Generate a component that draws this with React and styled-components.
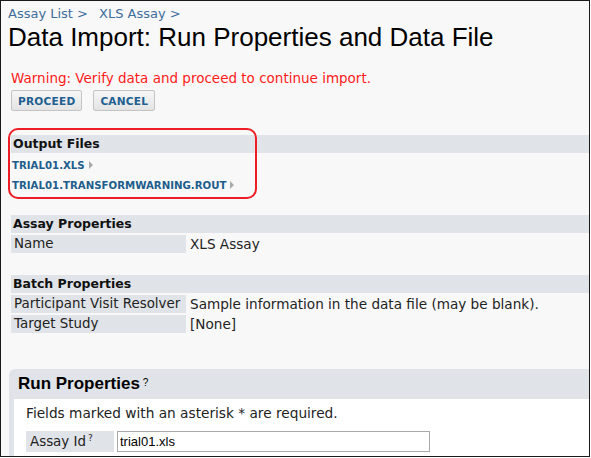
import React from "react";
import styled, { createGlobalStyle } from "styled-components";

const GlobalStyle = createGlobalStyle`
  html, body {
    margin: 0;
    padding: 0;
    background: #ffffff;
  }
`;

const Frame = styled.div`
  width: 590px;
  height: 457px;
  box-sizing: border-box;
  border: 1px solid #1a1a1a;
  background: #f8f8f8;
  overflow: hidden;
  font-family: "DejaVu Sans", Verdana, sans-serif;
  font-size: 13.4px;
  color: #222;
`;

const Page = styled.div`
  padding: 4px 0 0 7px;
  display: flex;
  flex-direction: column;
`;

const Breadcrumb = styled.div`
  font-size: 13px;
  color: #3e6e9c;
  height: 17px;
  line-height: 17px;
`;

const Crumb = styled.span`
  margin-right: 11px;
`;

const Title = styled.h1`
  margin: 0;
  font-family: "Liberation Sans", Arial, sans-serif;
  font-weight: 400;
  font-size: 26px;
  line-height: 30px;
  color: #000;
`;

const Warning = styled.div`
  margin: 18px 0 0 3px;
  color: #ff1a1a;
  font-size: 13.5px;
  line-height: 16px;
`;

const ButtonRow = styled.div`
  display: flex;
  gap: 11px;
  margin: 4px 0 0 3px;
`;

const Button = styled.button`
  height: 21px;
  padding: 0 6px;
  box-sizing: border-box;
  border: 1px solid #c4c4c4;
  border-radius: 2px;
  background: linear-gradient(#f6f6f6, #e4e4e4);
  color: #1f5f91;
  font-family: "DejaVu Sans", Verdana, sans-serif;
  font-weight: 700;
  font-size: 10.6px;
  letter-spacing: 0.2px;
`;

const Section = styled.div`
  position: relative;
  margin-top: ${(p) => p.$top}px;
  margin-left: 3px;
`;

const Highlight = styled.div`
  position: absolute;
  left: -3px;
  top: -7px;
  width: 249px;
  height: 71px;
  box-sizing: border-box;
  border: 2px solid #ee1c24;
  border-radius: 10px;
  pointer-events: none;
`;

const SectionHeader = styled.div`
  height: 18px;
  line-height: 18px;
  background: #e0e4e8;
  padding-left: 2px;
  font-weight: 700;
  font-size: 12.5px;
  color: #111;
`;

const FileList = styled.div`
  display: flex;
  flex-direction: column;
  padding: 2px 0 0 1px;
`;

const FileLink = styled.a`
  display: flex;
  align-items: center;
  gap: 4px;
  height: 20px;
  color: #215d8c;
  font-weight: 700;
  font-size: 10.2px;
  text-decoration: none;
`;

const Caret = styled.span`
  width: 0;
  height: 0;
  border-top: 4px solid transparent;
  border-bottom: 4px solid transparent;
  border-left: 4px solid #aaaaaa;
`;

const PropGrid = styled.div`
  display: grid;
  grid-template-columns: 175px 1fr;
  column-gap: 4px;
  row-gap: 2px;
  margin-top: 2px;
`;

const Label = styled.div`
  height: 18px;
  line-height: 18px;
  background: #e0e4e8;
  padding-left: 3px;
  white-space: nowrap;
`;

const Value = styled.div`
  height: 18px;
  line-height: 18px;
  white-space: nowrap;
  font-size: 13.6px;
`;

const Panel = styled.div`
  margin-top: ${(p) => p.$top}px;
  margin-left: 1px;
  width: 600px;
  background: #e0e4e8;
  border-top-left-radius: 6px;
  padding: 0 0 0 5px;
`;

const PanelHeader = styled.div`
  height: 30px;
  display: flex;
  align-items: center;
  padding-left: 4px;
  font-family: "Liberation Sans", Arial, sans-serif;
  font-weight: 700;
  font-size: 17px;
  color: #000;
`;

const Sup = styled.sup`
  font-size: 10px;
  font-weight: 400;
  margin-left: 3px;
  position: relative;
  top: -2px;
`;

const PanelBody = styled.div`
  background: #ffffff;
  padding: 6px 0 0 12px;
  height: 60px;
`;

const Note = styled.div`
  line-height: 16px;
  font-size: 13.7px;
`;

const FieldRow = styled.div`
  display: flex;
  gap: 3px;
  margin-top: 10px;
`;

const FieldLabel = styled.div`
  width: 88px;
  height: 21px;
  box-sizing: border-box;
  background: #e0e4e8;
  padding: 2px 0 0 4px;
`;

const SmallSup = styled.sup`
  font-size: 9px;
  margin-left: 2px;
`;

const Input = styled.input`
  width: 313px;
  height: 21px;
  box-sizing: border-box;
  border: 1px solid #a9a9a9;
  padding: 0 2px;
  font-family: "Liberation Sans", Arial, sans-serif;
  font-size: 13px;
  color: #000;
  background: #fff;
`;

export default function App() {
  return (
    <Frame>
      <GlobalStyle />
      <Page>
        <Breadcrumb>
          <Crumb>Assay List &gt;</Crumb>
          <Crumb>XLS Assay &gt;</Crumb>
        </Breadcrumb>
        <Title>Data Import: Run Properties and Data File</Title>
        <Warning>Warning: Verify data and proceed to continue import.</Warning>
        <ButtonRow>
          <Button>PROCEED</Button>
          <Button>CANCEL</Button>
        </ButtonRow>

        <Section $top={24}>
          <Highlight />
          <SectionHeader>Output Files</SectionHeader>
          <FileList>
            <FileLink href="#">
              TRIAL01.XLS <Caret />
            </FileLink>
            <FileLink href="#">
              TRIAL01.TRANSFORMWARNING.ROUT <Caret />
            </FileLink>
          </FileList>
        </Section>

        <Section $top={20}>
          <SectionHeader>Assay Properties</SectionHeader>
          <PropGrid>
            <Label>Name</Label>
            <Value>XLS Assay</Value>
          </PropGrid>
        </Section>

        <Section $top={22}>
          <SectionHeader>Batch Properties</SectionHeader>
          <PropGrid>
            <Label>Participant Visit Resolver</Label>
            <Value>Sample information in the data file (may be blank).</Value>
            <Label>Target Study</Label>
            <Value>[None]</Value>
          </PropGrid>
        </Section>

        <Panel $top={36}>
          <PanelHeader>
            Run Properties<Sup>?</Sup>
          </PanelHeader>
          <PanelBody>
            <Note>Fields marked with an asterisk * are required.</Note>
            <FieldRow>
              <FieldLabel>
                Assay Id<SmallSup>?</SmallSup>
              </FieldLabel>
              <Input defaultValue="trial01.xls" />
            </FieldRow>
          </PanelBody>
        </Panel>
      </Page>
    </Frame>
  );
}
